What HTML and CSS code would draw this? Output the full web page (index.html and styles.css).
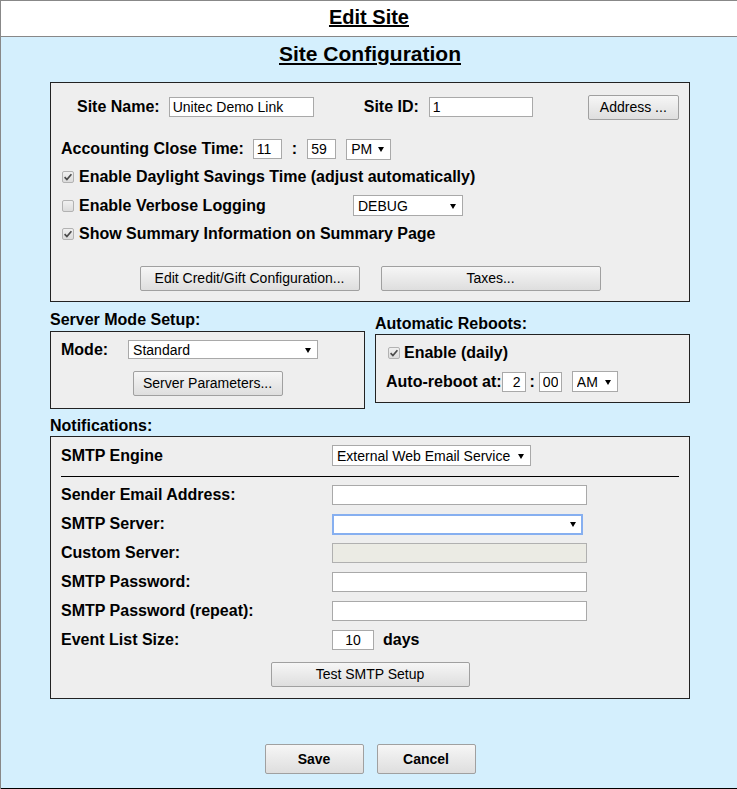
FILE: index.html
```html
<!DOCTYPE html>
<html lang="en">
<head>
    <meta charset="UTF-8">
    <meta name="viewport" content="width=device-width, initial-scale=1.0">
    <title>Edit Site</title>
    <link rel="stylesheet" href="styles.css">
</head>
<body>
<div class="page">
    <div class="header"><h1>Edit Site</h1></div>
    <div class="main">
        <h2>Site Configuration</h2>

        <div class="box site-box">
            <div class="row row-first">
                <label class="name-label">Site Name:</label>
                <input type="text" class="in-name" value="Unitec Demo Link">
                <label class="id-label">Site ID:</label>
                <input type="text" class="in-id" value="1">
                <button class="btn btn-address">Address ...</button>
            </div>
            <div class="row row-close">
                <label>Accounting Close Time:</label>
                <input type="text" class="in-time" value="11">
                <span class="colon">:</span>
                <input type="text" class="in-time" value="59">
                <span class="sel sel-ampm"><select><option>PM</option></select></span>
            </div>
            <div class="row row-check">
                <span class="cb"><svg width="10" height="10" viewBox="0 0 10 10"><path d="M1.6 5.2 L3.9 7.6 L8.4 2.2" fill="none" stroke="#4a4a4a" stroke-width="1.7"/></svg></span>
                <span>Enable Daylight Savings Time (adjust automatically)</span>
            </div>
            <div class="row row-check">
                <span class="cb"></span>
                <span class="verbose-label">Enable Verbose Logging</span>
                <span class="sel sel-debug"><select><option>DEBUG</option></select></span>
            </div>
            <div class="row row-check">
                <span class="cb"><svg width="10" height="10" viewBox="0 0 10 10"><path d="M1.6 5.2 L3.9 7.6 L8.4 2.2" fill="none" stroke="#4a4a4a" stroke-width="1.7"/></svg></span>
                <span>Show Summary Information on Summary Page</span>
            </div>
            <div class="btn-row">
                <button class="btn btn-wide">Edit Credit/Gift Configuration...</button>
                <button class="btn btn-wide">Taxes...</button>
            </div>
        </div>

        <div class="split">
            <div class="col">
                <div class="heading heading-mode">Server Mode Setup:</div>
                <div class="box mode-box">
                    <div class="mode-row">
                        <label>Mode:</label>
                        <span class="sel sel-mode"><select><option>Standard</option></select></span>
                    </div>
                    <div class="center-row">
                        <button class="btn btn-params">Server Parameters...</button>
                    </div>
                </div>
            </div>
            <div class="col">
                <div class="heading heading-reboot">Automatic Reboots:</div>
                <div class="box reboot-box">
                    <div class="reboot-row">
                        <span class="cb cb-reboot"><svg width="10" height="10" viewBox="0 0 10 10"><path d="M1.6 5.2 L3.9 7.6 L8.4 2.2" fill="none" stroke="#4a4a4a" stroke-width="1.7"/></svg></span>
                        <span>Enable (daily)</span>
                    </div>
                    <div class="reboot-row reboot-time">
                        <label>Auto-reboot at:</label>
                        <input type="text" class="in-hour" value="2">
                        <span class="colon colon-small">:</span>
                        <input type="text" class="in-min" value="00">
                        <span class="sel sel-ampm sel-am"><select><option>AM</option></select></span>
                    </div>
                </div>
            </div>
        </div>

        <div class="heading heading-notify">Notifications:</div>
        <div class="box notify-box">
            <div class="field engine-row">
                <label>SMTP Engine</label>
                <span class="sel sel-engine"><select><option>External Web Email Service</option></select></span>
            </div>
            <div class="rule"></div>
            <div class="fields">
                <div class="field">
                    <label>Sender Email Address:</label>
                    <input type="text" class="in-wide">
                </div>
                <div class="field">
                    <label>SMTP Server:</label>
                    <span class="sel sel-server"><select><option></option></select></span>
                </div>
                <div class="field">
                    <label>Custom Server:</label>
                    <input type="text" class="in-wide" disabled>
                </div>
                <div class="field">
                    <label>SMTP Password:</label>
                    <input type="password" class="in-wide">
                </div>
                <div class="field">
                    <label>SMTP Password (repeat):</label>
                    <input type="password" class="in-wide">
                </div>
                <div class="field">
                    <label>Event List Size:</label>
                    <input type="text" class="in-days" value="10">
                    <span class="days">days</span>
                </div>
            </div>
            <div class="center-row test-row">
                <button class="btn btn-test">Test SMTP Setup</button>
            </div>
        </div>

        <div class="actions">
            <button class="btn btn-action">Save</button>
            <button class="btn btn-action">Cancel</button>
        </div>
    </div>
</div>
</body>
</html>
```

FILE: styles.css
```css
body {
    margin: 0;
    font-family: "Liberation Sans", Arial, sans-serif;
    color: #000;
}
.page {
    border-left: 1px solid #888;
    border-top: 1px solid #888;
}
.header {
    height: 35px;
    background: #fff;
    border-bottom: 1px solid #888;
    text-align: center;
}
h1 {
    margin: 0;
    font-size: 20px;
    line-height: 33px;
    text-decoration: underline;
}
.main {
    box-sizing: border-box;
    height: 752px;
    padding-top: 5px;
    padding-left: 2px;
    background: #d4effd;
    border-bottom: 1px solid #000;
}
h2 {
    margin: 0;
    font-size: 21px;
    line-height: 24px;
    text-align: center;
    text-decoration: underline;
}
label, .row, .heading, .days, .reboot-row {
    font-size: 16px;
    font-weight: bold;
}
.box {
    box-sizing: border-box;
    background: #eee;
    border: 1px solid #222;
}
.site-box {
    width: 640px;
    margin: 16px auto 0;
    padding: 10px 10px 10px;
}
.row {
    display: flex;
    align-items: center;
    height: 28.5px;
}
.row-first {
    height: 28px;
    margin-bottom: 14px;
}
.row-close {
    height: 28px;
}
.name-label {
    margin-left: 16px;
    margin-right: 9px;
}
.id-label {
    margin-left: 50px;
    margin-right: 10px;
}
input {
    box-sizing: border-box;
    height: 20px;
    padding: 1px 3px;
    border: 1px solid #a9a9a9;
    background: #fff;
    font-family: "Liberation Sans", Arial, sans-serif;
    font-size: 14px;
    color: #000;
    outline: none;
}
input:disabled {
    background: #ebebe4;
    border-color: #b0b0b0;
}
.in-name { width: 145px; }
.in-id { width: 104px; }
.in-time {
    width: 29px;
}
.row-close label {
    margin-right: 9px;
}
.colon {
    margin: 0 10px;
}
.colon-small {
    margin: 0 4px;
}
.sel {
    position: relative;
    display: inline-block;
}
.sel::after {
    content: "";
    position: absolute;
    right: 7px;
    top: 50%;
    margin-top: -2px;
    border-left: 3px solid transparent;
    border-right: 3px solid transparent;
    border-top: 5px solid #000;
    pointer-events: none;
}
select {
    -webkit-appearance: none;
    appearance: none;
    box-sizing: border-box;
    display: block;
    height: 21px;
    padding: 0 0 0 4px;
    border: 1px solid #a9a9a9;
    border-radius: 0;
    background: #fff;
    font-family: "Liberation Sans", Arial, sans-serif;
    font-size: 14px;
    color: #000;
    outline: none;
}
.sel-ampm {
    margin-left: 10px;
}
.sel-ampm select { width: 45px; }
.sel-debug select { width: 110px; }
.cb {
    box-sizing: border-box;
    display: inline-flex;
    align-items: center;
    justify-content: center;
    width: 12px;
    height: 12px;
    margin: 0 5px 0 1px;
    border: 1px solid #b2b2b2;
    border-radius: 2px;
    background: linear-gradient(#f0f0f0, #dcdcdc);
}
.verbose-label {
    width: 274px;
}
.btn {
    box-sizing: border-box;
    height: 25px;
    padding: 0;
    border: 1px solid #a0a0a0;
    border-radius: 2px;
    background: linear-gradient(#f6f6f6, #dedede);
    font-family: "Liberation Sans", Arial, sans-serif;
    font-size: 14px;
    color: #000;
}
.btn-address {
    width: 91px;
    margin-left: 55px;
}
.btn-row {
    display: flex;
    justify-content: center;
    gap: 21px;
    margin-top: 17px;
}
.btn-wide { width: 220px; }

.split {
    display: flex;
    align-items: flex-start;
    gap: 10px;
    width: 640px;
    margin: 0 auto;
}
.col {
    width: 315px;
}
.heading {
    line-height: 18px;
}
.heading-mode { margin-top: 9px; }
.heading-reboot { margin-top: 13px; }
.mode-box {
    margin-top: 2px;
    padding: 8px 10px 12px;
}
.mode-row {
    display: flex;
    align-items: center;
    height: 20px;
}
.sel-mode {
    margin-left: 20px;
}
.sel-mode select {
    width: 190px;
    height: 19px;
}
.center-row {
    display: flex;
    justify-content: center;
}
.mode-box .center-row {
    margin-top: 11px;
}
.btn-params { width: 150px; }
.reboot-box {
    margin-top: 1px;
    padding: 5px 10px 7px;
}
.reboot-row {
    display: flex;
    align-items: center;
    height: 26px;
}
.cb-reboot {
    margin: 0 4px 0 2px;
}
.reboot-time {
    margin-top: 3px;
}
.in-hour {
    width: 24px;
    text-align: right;
    padding-right: 4px;
}
.in-min { width: 23px; }
.sel-am select { width: 46px; }

.heading-notify {
    width: 640px;
    margin: 8px auto 0;
}
.notify-box {
    width: 640px;
    margin: 1px auto 0;
    padding: 6px 10px 11px;
}
.field {
    display: flex;
    align-items: center;
    height: 29px;
}
.field label {
    width: 271px;
}
.engine-row {
    height: 26px;
}
.sel-engine select { width: 199px; }
.rule {
    height: 1px;
    margin-top: 7px;
    background: #000;
}
.fields {
    margin-top: 4px;
}
.in-wide { width: 255px; }
.sel-server select {
    width: 251px;
    height: 21px;
    border: 2px solid #86aff0;
}
.in-days {
    width: 42px;
    text-align: center;
}
.days {
    margin-left: 9px;
}
.test-row {
    margin-top: 7px;
}
.btn-test { width: 199px; }

.actions {
    display: flex;
    justify-content: center;
    gap: 13px;
    margin-top: 45px;
}
.btn-action {
    width: 99px;
    height: 30px;
    font-weight: bold;
}
```
